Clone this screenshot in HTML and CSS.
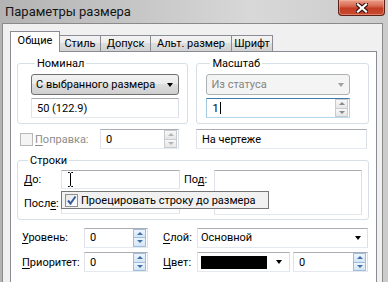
FILE: index.html
```html
<!DOCTYPE html>
<html>
<head>
<meta charset="utf-8">
<link rel="stylesheet" href="styles.css">
</head>
<body>
<div class="window">
  <div class="titlebar">
    <span class="title">Параметры размера</span>
    <div class="close">
      <svg width="12" height="10" viewBox="0 0 12 10">
        <path d="M2 1.5 L10 8.5 M10 1.5 L2 8.5" stroke="#3b1410" stroke-width="4.5" stroke-linecap="square"/>
        <path d="M2 1.5 L10 8.5 M10 1.5 L2 8.5" stroke="#fff" stroke-width="2.2" stroke-linecap="square"/>
      </svg>
    </div>
  </div>
  <div class="client">
    <div class="tabs">
      <div class="tab active t1">Общие</div>
      <div class="tab t2">Стиль</div>
      <div class="tab t3">Допуск</div>
      <div class="tab t4">Альт. размер</div>
      <div class="tab t5">Шрифт</div>
    </div>
    <div class="page">
      <div class="top-row">
        <fieldset class="group nominal">
          <legend>Номинал</legend>
          <div class="combo"><span class="combo-text">С выбранного размера</span><i class="arrow"></i></div>
          <div class="edit">50 (122.9)</div>
        </fieldset>
        <fieldset class="group scale">
          <legend>Масштаб</legend>
          <div class="combo disabled"><span class="combo-text">Из статуса</span><i class="arrow"></i></div>
          <div class="edit focus spin-edit"><span>1</span><span class="caret"></span>
            <div class="spinner gray"><i><b class="up"></b></i><i><b class="down"></b></i></div>
          </div>
        </fieldset>
      </div>

      <div class="corr-row">
        <span class="checkbox disabled"></span>
        <span class="label disabled-text"><u>П</u>оправка:</span>
        <div class="edit spin-edit corr"><span>0</span>
          <div class="spinner gray dis"><i><b class="up"></b></i><i><b class="down"></b></i></div>
        </div>
        <div class="edit drawing">На чертеже</div>
      </div>

      <fieldset class="group lines">
        <legend>Строки</legend>
        <div class="lines-grid">
          <span class="label"><u>Д</u>о:</span>
          <div class="edit before">
            <svg class="ibeam" width="7" height="17" viewBox="0 0 7 17">
              <path d="M1 1.5 H2.5 L3.5 2.5 L4.5 1.5 H6 M3.5 2.5 V14.5 M1 15.5 H2.5 L3.5 14.5 L4.5 15.5 H6" stroke="#fff" stroke-width="3" fill="none"/>
              <path d="M1 1.5 H2.5 L3.5 2.5 L4.5 1.5 H6 M3.5 2.5 V14.5 M1 15.5 H2.5 L3.5 14.5 L4.5 15.5 H6" stroke="#000" stroke-width="1" fill="none"/>
            </svg>
          </div>
          <span class="label under">По<u>д</u>:</span>
          <div class="edit under-edit"></div>
          <span class="label">Посл<u>е</u>:</span>
          <div class="edit after"></div>
          <div class="tooltip">
            <span class="checkbox checked">
              <svg width="11" height="11" viewBox="0 0 11 11"><path d="M2 5.5 L4.5 8.5 L9.5 1.5" stroke="#3a5a9a" stroke-width="2" fill="none"/></svg>
            </span>
            <span>Проецировать строку до размера</span>
          </div>
        </div>
      </fieldset>

      <div class="bottom-grid">
        <span class="label"><u>У</u>ровень:</span>
        <div class="edit spin-edit"><span>0</span>
          <div class="spinner blue"><i><b class="up"></b></i><i><b class="down"></b></i></div>
        </div>
        <span></span>
        <span class="label"><u>С</u>лой:</span>
        <div class="combo white"><span class="combo-text">Основной</span><i class="arrow"></i></div>

        <span class="label"><u>П</u>риоритет:</span>
        <div class="edit spin-edit"><span>0</span>
          <div class="spinner blue"><i><b class="up"></b></i><i><b class="down"></b></i></div>
        </div>
        <span></span>
        <span class="label"><u>Ц</u>вет:</span>
        <div class="color-cell">
          <div class="combo white color"><span class="swatch"></span><i class="arrow"></i></div>
          <div class="edit spin-edit width-edit"><span>0</span>
            <div class="spinner blue"><i><b class="up"></b></i><i><b class="down"></b></i></div>
          </div>
        </div>
      </div>
    </div>
  </div>
</div>
</body>
</html>
```

FILE: styles.css
```css
* { box-sizing: border-box; }
html, body { margin: 0; padding: 0; }
body {
  width: 388px; height: 282px; overflow: hidden;
  font-family: Roboto, "Noto Sans", sans-serif;
  font-size: 11px; color: #000;
}
u { text-decoration: underline; text-underline-offset: 2px; }

.window {
  width: 388px; height: 282px;
  background: linear-gradient(90deg, #b3b3b3 0%, #c6c6c6 35%, #d8d8d8 65%, #cbcbcb 100%);
  display: flex; flex-direction: column;
}
.titlebar { height: 23px; flex: none; display: flex; align-items: flex-start; }
.title { padding: 3px 0 0 5px; font-size: 13px; line-height: 17px; color: #151515; }
.close {
  margin-left: auto; margin-right: 3px;
  width: 47px; height: 16px;
  border: 1px solid #5a2219; border-top: none;
  border-radius: 0 0 4px 4px;
  background: linear-gradient(#e9a08b 0%, #d86a52 40%, #c33d25 55%, #c84a30 100%);
  box-shadow: inset 0 0 0 1px rgba(255, 190, 170, 0.45);
  display: flex; align-items: center; justify-content: center;
}

.client {
  flex: 1; margin: 0 5px 0 2px;
  background: #f0f0f0;
  border: 1px solid #8a8a8a; border-bottom: none;
  padding: 7px 0 0 7px;
  display: flex; flex-direction: column;
}
.tabs { display: flex; align-items: flex-end; height: 20px; position: relative; z-index: 1; }
.tab {
  height: 16px; margin-left: -1px;
  border: 1px solid #898c95; border-bottom: none;
  line-height: 15px; white-space: nowrap; text-align: center;
  background: linear-gradient(#f3f3f3 0%, #ececec 50%, #dedede 50%, #d2d2d2 100%);
}
.tab.active {
  height: 21px; margin-bottom: -1px; margin-left: 0;
  background: #fff; line-height: 18px; position: relative; z-index: 2;
}
.t1 { width: 50px; }
.t2 { width: 42px; }
.t3 { width: 51px; }
.t4 { width: 82px; }
.t5 { width: 42px; }

.page {
  flex: 1; width: 367px;
  border: 1px solid #898c95; border-bottom: none;
  background: #fff;
  padding: 3px 7px 0 6px;
  display: flex; flex-direction: column;
}

.group {
  margin: 0; min-width: 0;
  border: 1px solid #d5dfe5; border-radius: 3px;
  position: relative;
}
.group legend {
  margin-left: 4px; padding: 2px 2px 0 2px;
  line-height: 14px;
}
.top-row { display: flex; gap: 8px; }
.nominal { width: 172px; padding: 3px 8px 5px 13px; }
.scale { width: 173px; padding: 3px 18px 5px 9px; }
.nominal .combo, .scale .combo { height: 21px; }
.nominal .edit, .scale .edit { height: 20px; margin-top: 3px; }

.edit {
  height: 20px; background: #fff;
  border: 1px solid; border-color: #abadb3 #dbdfe6 #e3e9ef #e2e3ea;
  padding: 0 0 0 5px;
  display: flex; align-items: center;
  white-space: nowrap; position: relative;
}
.edit.focus { border-color: #3d7bad #b5cfe7 #b7d9ed #a4c9e3; }
.caret { width: 1px; height: 12px; background: #000; margin-left: 1px; }

.combo {
  height: 20px; display: flex; align-items: center;
  border: 1px solid #707070; border-radius: 3px;
  background: linear-gradient(#f2f2f2 0%, #ebebeb 50%, #dddddd 50%, #cfcfcf 100%);
  padding: 0 5px 0 4px;
  white-space: nowrap;
}
.combo-text { flex: 1; }
.arrow {
  width: 0; height: 0;
  border-left: 3.5px solid transparent; border-right: 3.5px solid transparent;
  border-top: 4px solid #000;
}
.combo.disabled { border-color: #adb2b5; background: #f4f4f4; color: #838383; }
.combo.disabled .arrow { border-top-color: #a0a0a0; }
.combo.white { background: #fff; border-color: #abadb3 #dbdfe6 #e3e9ef #e2e3ea; border-radius: 0; padding: 0 6px 0 3px; }

.spinner {
  margin-left: auto; width: 14px; height: 18px;
  display: flex; flex-direction: column; gap: 0;
  padding: 0 1px 0 0;
}
.spinner i {
  flex: 1; display: flex; align-items: center; justify-content: center;
  border: 1px solid #c8ccd2; margin-top: -1px;
  background: linear-gradient(#f8f8f8, #e6e6e6);
}
.spinner i:first-child { margin-top: 0; }
.spinner .up, .spinner .down {
  width: 0; height: 0;
  border-left: 3px solid transparent; border-right: 3px solid transparent;
}
.spinner .up { border-bottom: 3px solid #8a8a8a; }
.spinner .down { border-top: 3px solid #8a8a8a; }
.spinner.dis .up { border-bottom-color: #b4b4b4; }
.spinner.dis .down { border-top-color: #b4b4b4; }
.spinner.blue i { border-color: #9fbcdc; background: linear-gradient(#eef5fc, #d4e5f6); }
.spinner.blue .up { border-bottom-color: #3e6fa8; }
.spinner.blue .down { border-top-color: #3e6fa8; }

.corr-row { display: flex; align-items: center; height: 20px; margin-top: 5px; }
.checkbox {
  width: 13px; height: 13px; flex: none;
  border: 1px solid #8f8f8f; background: linear-gradient(135deg, #dcdcdc, #fff);
  display: inline-flex; align-items: center; justify-content: center;
}
.checkbox.disabled { margin-left: 3px; border-color: #b8b8b8; background: #f4f4f4; }
.disabled-text { color: #8d8d8d; margin-left: 2px; width: 65px; }
.corr { width: 79px; }
.drawing { width: 171px; margin-left: 17px; }

.lines { margin-top: 3px; padding: 2px 7px 5px 6px; }
.lines-grid {
  display: grid; position: relative;
  grid-template-columns: 37px 119px 34px 148px;
  grid-template-rows: 19px 21px;
  row-gap: 4px;
  align-items: center;
}
.lines-grid .label.under { padding-left: 4px; }
.under-edit { grid-column: 4; grid-row: 1 / span 2; height: 45px; }
.before { height: 19px; }
.after { height: 21px; }
.ibeam { position: absolute; left: 5px; top: 0; }

.tooltip {
  position: absolute; left: 37px; top: 21px;
  width: 208px; height: 18px;
  border: 1px solid #767676; background: #f1f1f1;
  display: flex; align-items: center; gap: 3px;
  padding: 0 3px;
  white-space: nowrap;
}
.checkbox.checked { background: linear-gradient(135deg, #e6e6e6, #fff); border-color: #8e8f8f; }

.bottom-grid {
  display: grid;
  grid-template-columns: 62px 64px 15px 34px 171px;
  grid-template-rows: 21px 20px;
  row-gap: 4px;
  padding-left: 5px; margin-top: 7px;
  align-items: center;
}
.color-cell { display: flex; gap: 3px; height: 20px; }
.color { width: 93px; height: 20px; }
.swatch { width: 66px; height: 13px; background: #000; margin-right: 9px; }
.width-edit { flex: 1; }
```
